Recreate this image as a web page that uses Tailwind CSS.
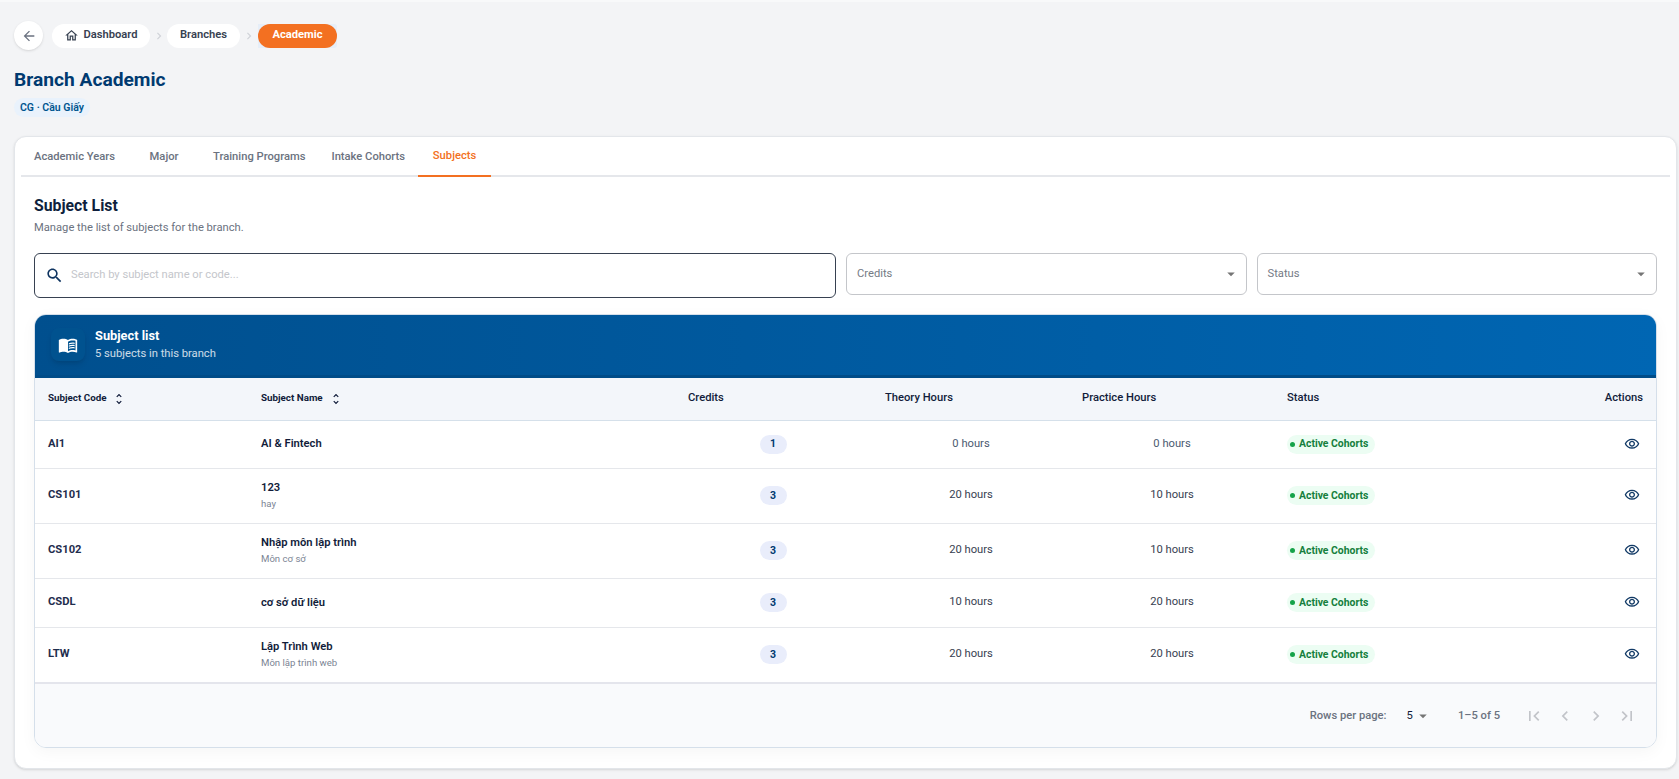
<!DOCTYPE html>
<html lang="en">
<head>
  <meta charset="UTF-8" />
  <meta name="viewport" content="width=device-width, initial-scale=1.0" />
  <title>Branch Academic</title>
  <script src="https://cdn.jsdelivr.net/npm/@tailwindcss/browser@4"></script>
</head>
<body class="bg-[#f3f4f6] h-[779px] overflow-hidden font-['Roboto',sans-serif] text-[#111c3a]">
  <div class="border-t-2 border-[#f8f9fa] pl-[14px] pr-[2px] pt-[19px]">

    <!-- Breadcrumb -->
    <nav class="flex items-center h-[29px]">
      <button class="w-[29px] h-[29px] rounded-full bg-white shadow-sm flex items-center justify-center text-[#6b7280]">
        <svg class="w-4 h-4" viewBox="0 0 24 24" fill="currentColor"><path d="M20 11H7.83l5.59-5.59L12 4l-8 8 8 8 1.41-1.41L7.83 13H20v-2z"/></svg>
      </button>
      <a class="ml-[9px] h-6 w-[98px] rounded-full bg-white flex items-center justify-center gap-[4px] text-[11.2px] font-semibold text-[#374151]">
        <svg class="w-[15px] h-[15px]" viewBox="0 0 24 24" fill="currentColor"><path d="M12 5.69l5 4.5V18h-2v-6H9v6H7v-7.81l5-4.5M12 3L2 12h3v8h6v-6h2v6h6v-8h3L12 3z"/></svg>
        Dashboard
      </a>
      <svg class="w-[14px] h-[14px] mx-[1.5px] text-[#cfd2d8]" viewBox="0 0 24 24" fill="currentColor"><path d="M8.59 16.59L13.17 12 8.59 7.41 10 6l6 6-6 6-1.41-1.41z"/></svg>
      <a class="h-6 w-[73px] rounded-full bg-white flex items-center justify-center text-[11.2px] font-semibold text-[#374151]">Branches</a>
      <svg class="w-[14px] h-[14px] mx-[2px] text-[#cfd2d8]" viewBox="0 0 24 24" fill="currentColor"><path d="M8.59 16.59L13.17 12 8.59 7.41 10 6l6 6-6 6-1.41-1.41z"/></svg>
      <div class="bg-[#e6eef8] rounded-r-[3px]">
        <a class="h-6 w-[79px] rounded-full bg-[#f37021] flex items-center justify-center text-[11.2px] font-bold text-white">Academic</a>
      </div>
    </nav>

    <!-- Title -->
    <h1 class="mt-[16px] text-[19.2px] leading-[28px] font-bold text-[#003a70]">Branch Academic</h1>
    <span class="mt-1 inline-flex items-center h-[19px] px-[6px] rounded-full bg-[#e9f2fc] text-[10.5px] font-semibold text-[#00558f]">CG · Cầu Giấy</span>

    <!-- Main card -->
    <section class="mt-[18px] h-[633px] bg-white border border-[#e3e6ea] rounded-xl shadow-sm">
      <div class="mx-[6px] h-[40px] flex border-b-2 border-[#e5e7eb] text-[11.2px] font-medium text-[#6b7280]">
        <a class="px-[13px] h-[40px] flex items-center">Academic Years</a>
        <a class="w-[72px] h-[40px] flex items-center justify-center">Major</a>
        <a class="px-[13px] h-[40px] flex items-center">Training Programs</a>
        <a class="px-[13px] h-[40px] flex items-center">Intake Cohorts</a>
        <a class="w-[73px] h-[40px] flex items-center justify-center border-b-2 border-[#f37021] text-[#f37021]">Subjects</a>
      </div>

      <div class="px-[19px]">
        <h2 class="mt-[17px] text-[15.8px] leading-[24px] font-bold text-[#0f1f3d]">Subject List</h2>
        <p class="mt-[1px] text-[11.2px] leading-[18px] text-[#6b7280]">Manage the list of subjects for the branch.</p>

        <!-- Filters -->
        <div class="mt-[16px] flex items-start gap-[10px]">
          <div class="w-[802px] shrink-0 h-[45px] flex items-center pl-[10px] gap-[7px] bg-white border border-[#374151] rounded-md">
            <svg class="w-[19px] h-[19px] text-[#0f3460]" viewBox="0 0 24 24" fill="currentColor"><path d="M15.5 14h-.79l-.28-.27C15.41 12.59 16 11.11 16 9.5 16 5.91 13.09 3 9.5 3S3 5.91 3 9.5 5.91 16 9.5 16c1.61 0 3.09-.59 4.23-1.57l.27.28v.79l5 4.99L20.49 19l-4.99-5zm-6 0C7.01 14 5 11.99 5 9.5S7.01 5 9.5 5 14 7.01 14 9.5 11.99 14 9.5 14z"/></svg>
            <input class="flex-1 text-[11.2px] outline-none placeholder-[#c4c6cb]" placeholder="Search by subject name or code..." />
          </div>
          <div class="flex-1 h-[42px] flex items-center justify-between pl-[10px] pr-[6px] bg-white border border-[#c4c6ca] rounded-md text-[11.2px] text-[#757b85]">
            Credits
            <svg class="w-[18px] h-[18px] text-[#757575]" viewBox="0 0 24 24" fill="currentColor"><path d="M7 10l5 5 5-5z"/></svg>
          </div>
          <div class="flex-1 h-[42px] flex items-center justify-between pl-[10px] pr-[6px] bg-white border border-[#c4c6ca] rounded-md text-[11.2px] text-[#757b85]">
            Status
            <svg class="w-[18px] h-[18px] text-[#757575]" viewBox="0 0 24 24" fill="currentColor"><path d="M7 10l5 5 5-5z"/></svg>
          </div>
        </div>

        <!-- Table card -->
        <div class="mt-[16px] h-[434px] border border-[#d5dfea] rounded-xl overflow-hidden shadow-[0_4px_16px_rgba(0,0,0,0.04)]">
          <div class="h-[64px] -mx-px -mt-px flex items-center pl-[17px] gap-[10px] bg-gradient-to-r from-[#004f8e] to-[#0066b3] border-b-[3px] border-[#004c88]">
            <div class="w-[34px] h-[33px] rounded-lg bg-[#00528f] shadow-md flex items-center justify-center">
              <svg class="w-5 h-5 text-white" viewBox="0 0 24 24" fill="currentColor"><path d="M21 5c-1.11-.35-2.33-.5-3.5-.5-1.95 0-4.05.4-5.5 1.5-1.45-1.1-3.55-1.5-5.5-1.5S2.45 4.9 1 6v14.65c0 .25.25.5.5.5.1 0 .15-.05.25-.05C3.1 20.45 5.05 20 6.5 20c1.95 0 4.05.4 5.5 1.5 1.35-.85 3.8-1.5 5.5-1.5 1.65 0 3.35.3 4.75 1.05.1.05.15.05.25.05.25 0 .5-.25.5-.5V6c-.6-.45-1.25-.75-2-1zm0 13.5c-1.1-.35-2.3-.5-3.5-.5-1.7 0-4.15.65-5.5 1.5V8c1.35-.85 3.8-1.5 5.5-1.5 1.2 0 2.4.15 3.5.5v11.5z"/><path d="M17.5 10.5c.88 0 1.73.09 2.5.26V9.24c-.79-.15-1.64-.24-2.5-.24-1.7 0-3.24.29-4.5.83v1.66c1.13-.64 2.7-.99 4.5-.99zM13 12.49v1.66c1.13-.64 2.7-.99 4.5-.99.88 0 1.73.09 2.5.26V11.9c-.79-.15-1.64-.24-2.5-.24-1.7 0-3.24.3-4.5.83zM17.5 14.33c-1.7 0-3.24.29-4.5.83v1.66c1.13-.64 2.7-.99 4.5-.99.88 0 1.73.09 2.5.26v-1.52c-.79-.16-1.64-.24-2.5-.24z"/></svg>
            </div>
            <div>
              <div class="text-[12.8px] leading-[18px] font-bold text-white">Subject list</div>
              <div class="text-[11.2px] leading-[18px] text-white/80">5 subjects in this branch</div>
            </div>
          </div>

          <table class="w-full table-fixed border-collapse text-[11.2px]">
            <colgroup>
              <col class="w-[213px]" /><col class="w-[426px]" /><col class="w-[198px]" /><col class="w-[198px]" /><col class="w-[204px]" /><col class="w-[210px]" /><col />
            </colgroup>
            <thead>
              <tr class="h-[42px] bg-[#f3f6fa] border-b border-[#d5e0ea] text-left font-medium">
                <th class="pl-[13px] text-[9.8px] font-bold">
                  <span class="inline-flex items-center gap-[6px]">Subject Code
                    <svg class="w-[14px] h-[14px]" viewBox="0 0 24 24" fill="currentColor"><path d="M12 5.83 15.17 9l1.41-1.41L12 3 7.41 7.59 8.83 9 12 5.83zm0 12.34L8.83 15l-1.41 1.41L12 21l4.59-4.59L15.17 15 12 18.17z"/></svg>
                  </span>
                </th>
                <th class="pl-[13px] text-[9.8px] font-bold">
                  <span class="inline-flex items-center gap-[6px]">Subject Name
                    <svg class="w-[14px] h-[14px]" viewBox="0 0 24 24" fill="currentColor"><path d="M12 5.83 15.17 9l1.41-1.41L12 3 7.41 7.59 8.83 9 12 5.83zm0 12.34L8.83 15l-1.41 1.41L12 21l4.59-4.59L15.17 15 12 18.17z"/></svg>
                  </span>
                </th>
                <th class="pl-[14px] font-medium">Credits</th>
                <th class="pl-[13px] font-medium">Theory Hours</th>
                <th class="pl-[12px] font-medium">Practice Hours</th>
                <th class="pl-[13px] font-medium">Status</th>
                <th class="pr-[13px] text-right font-medium">Actions</th>
              </tr>
            </thead>
            <tbody>
              <tr class="h-[48px] border-b border-[#e5e7eb]">
                <td class="pl-[13px] font-bold text-[#1f2d4d]">AI1</td>
                <td class="pl-[13px]"><div class="font-semibold leading-[16px]">AI &amp; Fintech</div></td>
                <td class="text-center"><span class="inline-flex items-center justify-center w-[27px] h-[19px] rounded-full bg-[#e9edfb] text-[10.5px] font-bold text-[#003a70]">1</span></td>
                <td class="text-center text-[#4b5a70]">0 hours</td>
                <td class="text-center text-[#4b5a70]">0 hours</td>
                <td class="pl-[13px]"><span class="inline-flex items-center gap-[4px] h-[19px] w-[88px] pl-[3px] rounded-full bg-[#ecfdf3] text-[10.4px] font-bold text-[#15803d]"><i class="w-[5px] h-[5px] rounded-full bg-[#16a34a]"></i>Active Cohorts</span></td>
                <td class="pr-[16px] text-right"><svg class="w-4 h-4 inline-block text-[#123a66]" viewBox="0 0 24 24" fill="currentColor"><path d="M12 6c3.79 0 7.17 2.13 8.82 5.5C19.17 14.87 15.79 17 12 17s-7.17-2.13-8.82-5.5C4.83 8.13 8.21 6 12 6m0-2C7 4 2.73 7.11 1 11.5 2.73 15.89 7 19 12 19s9.27-3.11 11-7.5C21.27 7.11 17 4 12 4zm0 5c1.38 0 2.5 1.12 2.5 2.5S13.38 14 12 14s-2.5-1.12-2.5-2.5S10.62 9 12 9m0-2c-2.48 0-4.5 2.02-4.5 4.5S9.52 16 12 16s4.5-2.02 4.5-4.5S14.48 7 12 7z"/></svg></td>
              </tr>
              <tr class="h-[55px] border-b border-[#e5e7eb]">
                <td class="pl-[13px] font-bold text-[#1f2d4d]">CS101</td>
                <td class="pl-[13px]"><div class="font-semibold leading-[16px]">123</div><div class="text-[9.6px] leading-[15px] text-[#7b8494]">hay</div></td>
                <td class="text-center"><span class="inline-flex items-center justify-center w-[27px] h-[19px] rounded-full bg-[#e9edfb] text-[10.5px] font-bold text-[#003a70]">3</span></td>
                <td class="text-center text-[#374151]">20 hours</td>
                <td class="text-center text-[#374151]">10 hours</td>
                <td class="pl-[13px]"><span class="inline-flex items-center gap-[4px] h-[19px] w-[88px] pl-[3px] rounded-full bg-[#ecfdf3] text-[10.4px] font-bold text-[#15803d]"><i class="w-[5px] h-[5px] rounded-full bg-[#16a34a]"></i>Active Cohorts</span></td>
                <td class="pr-[16px] text-right"><svg class="w-4 h-4 inline-block text-[#123a66]" viewBox="0 0 24 24" fill="currentColor"><path d="M12 6c3.79 0 7.17 2.13 8.82 5.5C19.17 14.87 15.79 17 12 17s-7.17-2.13-8.82-5.5C4.83 8.13 8.21 6 12 6m0-2C7 4 2.73 7.11 1 11.5 2.73 15.89 7 19 12 19s9.27-3.11 11-7.5C21.27 7.11 17 4 12 4zm0 5c1.38 0 2.5 1.12 2.5 2.5S13.38 14 12 14s-2.5-1.12-2.5-2.5S10.62 9 12 9m0-2c-2.48 0-4.5 2.02-4.5 4.5S9.52 16 12 16s4.5-2.02 4.5-4.5S14.48 7 12 7z"/></svg></td>
              </tr>
              <tr class="h-[55px] border-b border-[#e5e7eb]">
                <td class="pl-[13px] font-bold text-[#1f2d4d]">CS102</td>
                <td class="pl-[13px]"><div class="font-semibold leading-[16px]">Nhập môn lập trình</div><div class="text-[9.6px] leading-[15px] text-[#7b8494]">Môn cơ sở</div></td>
                <td class="text-center"><span class="inline-flex items-center justify-center w-[27px] h-[19px] rounded-full bg-[#e9edfb] text-[10.5px] font-bold text-[#003a70]">3</span></td>
                <td class="text-center text-[#374151]">20 hours</td>
                <td class="text-center text-[#374151]">10 hours</td>
                <td class="pl-[13px]"><span class="inline-flex items-center gap-[4px] h-[19px] w-[88px] pl-[3px] rounded-full bg-[#ecfdf3] text-[10.4px] font-bold text-[#15803d]"><i class="w-[5px] h-[5px] rounded-full bg-[#16a34a]"></i>Active Cohorts</span></td>
                <td class="pr-[16px] text-right"><svg class="w-4 h-4 inline-block text-[#123a66]" viewBox="0 0 24 24" fill="currentColor"><path d="M12 6c3.79 0 7.17 2.13 8.82 5.5C19.17 14.87 15.79 17 12 17s-7.17-2.13-8.82-5.5C4.83 8.13 8.21 6 12 6m0-2C7 4 2.73 7.11 1 11.5 2.73 15.89 7 19 12 19s9.27-3.11 11-7.5C21.27 7.11 17 4 12 4zm0 5c1.38 0 2.5 1.12 2.5 2.5S13.38 14 12 14s-2.5-1.12-2.5-2.5S10.62 9 12 9m0-2c-2.48 0-4.5 2.02-4.5 4.5S9.52 16 12 16s4.5-2.02 4.5-4.5S14.48 7 12 7z"/></svg></td>
              </tr>
              <tr class="h-[49px] border-b border-[#e5e7eb]">
                <td class="pl-[13px] font-bold text-[#1f2d4d]">CSDL</td>
                <td class="pl-[13px]"><div class="font-semibold leading-[16px]">cơ sở dữ liệu</div></td>
                <td class="text-center"><span class="inline-flex items-center justify-center w-[27px] h-[19px] rounded-full bg-[#e9edfb] text-[10.5px] font-bold text-[#003a70]">3</span></td>
                <td class="text-center text-[#374151]">10 hours</td>
                <td class="text-center text-[#374151]">20 hours</td>
                <td class="pl-[13px]"><span class="inline-flex items-center gap-[4px] h-[19px] w-[88px] pl-[3px] rounded-full bg-[#ecfdf3] text-[10.4px] font-bold text-[#15803d]"><i class="w-[5px] h-[5px] rounded-full bg-[#16a34a]"></i>Active Cohorts</span></td>
                <td class="pr-[16px] text-right"><svg class="w-4 h-4 inline-block text-[#123a66]" viewBox="0 0 24 24" fill="currentColor"><path d="M12 6c3.79 0 7.17 2.13 8.82 5.5C19.17 14.87 15.79 17 12 17s-7.17-2.13-8.82-5.5C4.83 8.13 8.21 6 12 6m0-2C7 4 2.73 7.11 1 11.5 2.73 15.89 7 19 12 19s9.27-3.11 11-7.5C21.27 7.11 17 4 12 4zm0 5c1.38 0 2.5 1.12 2.5 2.5S13.38 14 12 14s-2.5-1.12-2.5-2.5S10.62 9 12 9m0-2c-2.48 0-4.5 2.02-4.5 4.5S9.52 16 12 16s4.5-2.02 4.5-4.5S14.48 7 12 7z"/></svg></td>
              </tr>
              <tr class="h-[55px]">
                <td class="pl-[13px] font-bold text-[#1f2d4d]">LTW</td>
                <td class="pl-[13px]"><div class="font-semibold leading-[16px]">Lập Trình Web</div><div class="text-[9.6px] leading-[15px] text-[#7b8494]">Môn lập trình web</div></td>
                <td class="text-center"><span class="inline-flex items-center justify-center w-[27px] h-[19px] rounded-full bg-[#e9edfb] text-[10.5px] font-bold text-[#003a70]">3</span></td>
                <td class="text-center text-[#374151]">20 hours</td>
                <td class="text-center text-[#374151]">20 hours</td>
                <td class="pl-[13px]"><span class="inline-flex items-center gap-[4px] h-[19px] w-[88px] pl-[3px] rounded-full bg-[#ecfdf3] text-[10.4px] font-bold text-[#15803d]"><i class="w-[5px] h-[5px] rounded-full bg-[#16a34a]"></i>Active Cohorts</span></td>
                <td class="pr-[16px] text-right"><svg class="w-4 h-4 inline-block text-[#123a66]" viewBox="0 0 24 24" fill="currentColor"><path d="M12 6c3.79 0 7.17 2.13 8.82 5.5C19.17 14.87 15.79 17 12 17s-7.17-2.13-8.82-5.5C4.83 8.13 8.21 6 12 6m0-2C7 4 2.73 7.11 1 11.5 2.73 15.89 7 19 12 19s9.27-3.11 11-7.5C21.27 7.11 17 4 12 4zm0 5c1.38 0 2.5 1.12 2.5 2.5S13.38 14 12 14s-2.5-1.12-2.5-2.5S10.62 9 12 9m0-2c-2.48 0-4.5 2.02-4.5 4.5S9.52 16 12 16s4.5-2.02 4.5-4.5S14.48 7 12 7z"/></svg></td>
              </tr>
            </tbody>
          </table>

          <!-- Pagination -->
          <div class="h-[66px] bg-[#f9fafc] border-t-2 border-[#e4e5ec] flex items-center justify-end pr-[19px] text-[11.2px] font-medium text-[#6b7280]">
            <span>Rows per page:</span>
            <span class="ml-[20px] font-normal text-[#111c3a]">5</span>
            <svg class="ml-[1px] w-[18px] h-[18px] text-[#757575]" viewBox="0 0 24 24" fill="currentColor"><path d="M7 10l5 5 5-5z"/></svg>
            <span class="ml-[26px]">1–5 of 5</span>
            <div class="ml-[24px] flex gap-[11px] text-[#c2c4c9]">
              <svg class="w-5 h-5" viewBox="0 0 24 24" fill="currentColor"><path d="M18.41 16.59L13.82 12l4.59-4.59L17 6l-6 6 6 6zM6 6h2v12H6z"/></svg>
              <svg class="w-5 h-5" viewBox="0 0 24 24" fill="currentColor"><path d="M15.41 16.59L10.83 12l4.58-4.59L14 6l-6 6 6 6 1.41-1.41z"/></svg>
              <svg class="w-5 h-5" viewBox="0 0 24 24" fill="currentColor"><path d="M8.59 16.59L13.17 12 8.59 7.41 10 6l6 6-6 6-1.41-1.41z"/></svg>
              <svg class="w-5 h-5" viewBox="0 0 24 24" fill="currentColor"><path d="M5.59 7.41L10.18 12l-4.59 4.59L7 18l6-6-6-6zM16 6h2v12h-2z"/></svg>
            </div>
          </div>
        </div>
      </div>
    </section>
  </div>
</body>
</html>
